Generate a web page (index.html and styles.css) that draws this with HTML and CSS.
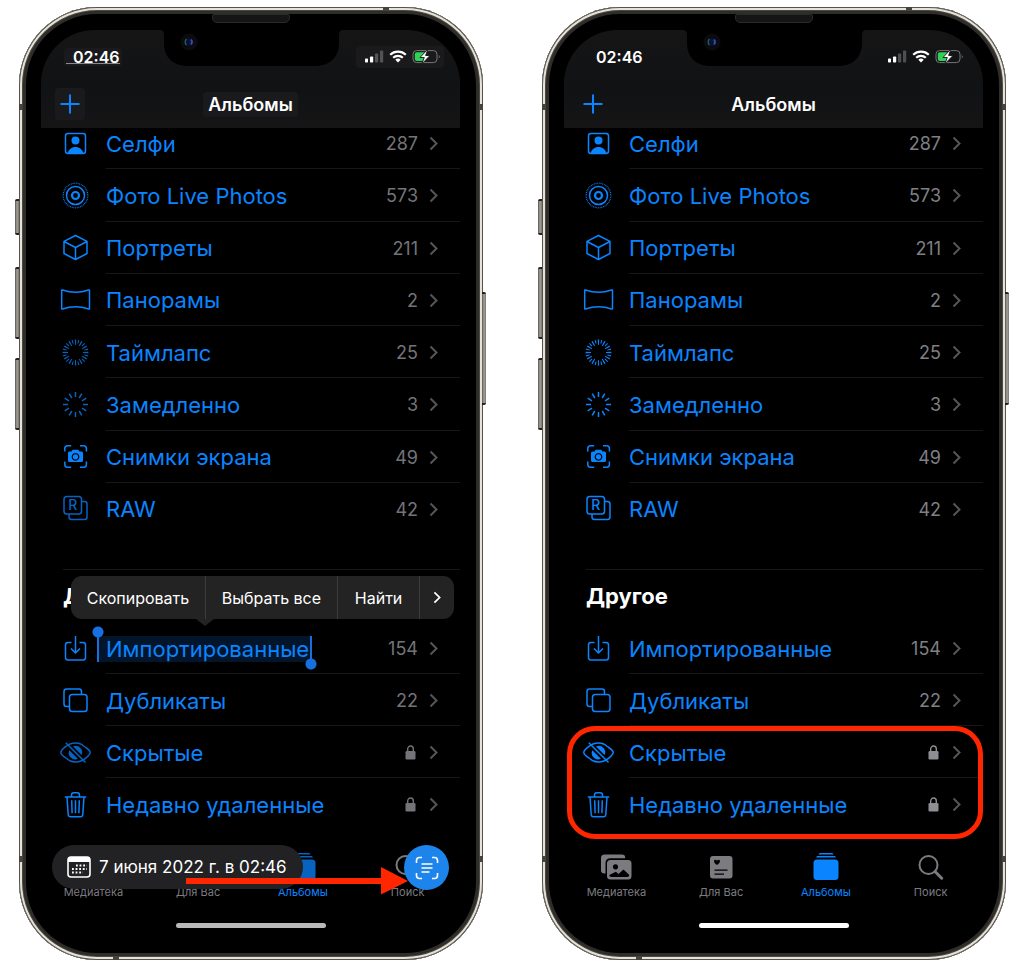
FILE: index.html
```html
<!DOCTYPE html>
<html lang="ru">

<head>
  <meta charset="UTF-8">
  <meta name="viewport" content="width=device-width, initial-scale=1.0">
  <title>Альбомы</title>
  <link rel="stylesheet" href="styles.css">
</head>

<body>
  <!-- icons -->
  <svg class="sprite" aria-hidden="true">
    <symbol id="i-selfie" viewBox="0 0 31 31">
      <rect x="5.5" y="5.5" width="20" height="20" rx="2.5" />
      <circle class="fill" cx="15.5" cy="12.5" r="4" />
      <path class="fill" d="M7.5 25.5c1-4 4-6.500 8-6.500s7 2.500 8 6.500z" />
    </symbol>
    <symbol id="i-live" viewBox="0 0 31 31">
      <circle cx="15.500" cy="15.500" r="3.500" stroke-width="2.200" />
      <circle cx="15.500" cy="15.500" r="9" />
      <circle cx="15.500" cy="15.500" r="12.300" stroke-width="1.200" pathLength="90" stroke-dasharray="1 1" />
    </symbol>
    <symbol id="i-cube" viewBox="0 0 31 31">
      <path d="M15.500 3.500 27 9.300V21.500L15.500 27.500 4 21.500V9.300zM4 9.500l11.500 6L27 9.500M15.500 15.500v12" />
    </symbol>
    <symbol id="i-pano" viewBox="0 0 31 31">
      <path d="M1.700 6.500q0-.8.8-.5c8.500 3 17.500 3 26 0q1-.3 1 .5v18q0 .8-1 .5c-8.500-3-17.500-3-26 0q-.8.3-.8-.5z" />
    </symbol>
    <symbol id="i-lapse" viewBox="0 0 31 31">
      <circle cx="15.500" cy="15.500" r="10.200" stroke-width="5.400" pathLength="120" stroke-dasharray="2.200 7.800" stroke-dashoffset="1.100" />
      <circle cx="15.500" cy="15.500" r="11" stroke-width="3.800" pathLength="120" stroke-dasharray="1.800 8.200" stroke-dashoffset="5.900" />
    </symbol>
    <symbol id="i-slomo" viewBox="0 0 31 31">
      <path d="M15.500 3v5M15.500 23v5M3 15.500h5M23 15.500h5M9.200 4.700l2.600 4.300M19.200 22l2.600 4.300M4.700 9.200l4.300 2.600M22 19.200l4.300 2.600M4.700 21.800 9 19.200M22 11.800l4.300-2.600M9.200 26.300l2.600-4.300M19.200 9l2.600-4.300" />
    </symbol>
    <symbol id="i-shot" viewBox="0 0 31 31">
      <path d="M4.800 10.500V7.500q0-2.800 2.800-2.800h3.600M20 4.700h3.600q2.800 0 2.800 2.800v3M26.400 20.500v3q0 2.800-2.800 2.800H20M11.200 26.300H7.600q-2.800 0-2.800-2.800v-3" />
      <path class="fill" fill-rule="evenodd" d="M8 12q0-1.500 1.500-1.500h2l1.200-1.700h5.600l1.200 1.700h2q1.500 0 1.500 1.500v7.500q0 1.500-1.500 1.500h-12Q8 21 8 19.500zM15.500 12a3.900 3.900 0 1 0 .01 0zM15.500 13.200a2.700 2.700 0 1 1-.01 0z" />
    </symbol>
    <symbol id="i-raw" viewBox="0 0 31 31">
      <rect x="4" y="3.500" width="17.500" height="17.500" rx="2.800" />
      <path d="M21.500 8.500h3q2.500 0 2.500 2.500v13q0 2.500-2.500 2.500h-13q-2.500 0-2.500-2.500v-3" />
      <text x="12.800" y="17.300">R</text>
    </symbol>
    <symbol id="i-import" viewBox="0 0 31 31">
      <path d="M11.500 9.500H8q-2.500 0-2.500 2.500v12.500Q5.500 27 8 27h15q2.500 0 2.500-2.500V12q0-2.500-2.500-2.500h-3.500M15.500 3v16.500M11 15.500l4.500 4.500 4.500-4.500" />
    </symbol>
    <symbol id="i-copies" viewBox="0 0 31 31">
      <rect x="9.500" y="9.500" width="17.500" height="17" rx="2.800" />
      <path d="M9.500 21.500h-3Q4 21.500 4 19V6.500Q4 4 6.500 4h12.500Q21.500 4 21.500 6.500v3" />
    </symbol>
    <symbol id="i-hidden" viewBox="0 0 31 31">
      <path d="M6 21C2.500 18.800.8 16.300.8 15.500c0-1.500 6-9.500 14.700-9.500 2 0 4 .4 5.700 1.200M25 10c3.500 2.200 5.200 4.700 5.200 5.500 0 1.500-6 9.500-14.700 9.500-2 0-4-.4-5.700-1.200" />
      <path d="M6 21 9.800 23.800M21.200 7.200 25 10M5.800 5.800 25.500 25.500" />
      <path class="fill" d="M13 9.500a6.500 6.500 0 0 1 8.600 8.600zM9.300 13.200a6.500 6.500 0 0 0 8.600 8.600z" />
    </symbol>
    <symbol id="i-trash" viewBox="0 0 31 31">
      <path d="M4.800 8h21.400M7 8l1.200 17.500q.2 2.300 2.300 2.300h10q2.100 0 2.300-2.300L24 8M11.500 8V6q0-2.300 2.300-2.300h3.400q2.300 0 2.300 2.300v2M11.700 11.300l.4 13M15.500 11.300v13M19.300 11.300l-.4 13" />
    </symbol>
    <symbol id="i-chevron" viewBox="0 0 9 15">
      <path d="M1.500 1.500 7.500 7.500 1.500 13.500" />
    </symbol>
    <symbol id="i-lock" viewBox="0 0 11 15">
      <rect x=".5" y="6" width="10" height="8.500" rx="1.300" fill="currentColor" />
      <path d="M2.700 6.500V4a2.800 3 0 0 1 5.600 0v2.500" fill="none" stroke="currentColor" stroke-width="1.400" />
    </symbol>
    <symbol id="i-status" viewBox="0 0 76 15">
      <g fill="#fff">
        <rect x="0" y="9.500" width="3" height="4" rx=".8" />
        <rect x="5" y="7.500" width="3.200" height="6" rx=".8" />
        <rect x="10" y="4.500" width="3.200" height="9" rx=".8" opacity=".25" />
        <rect x="15" y="1.500" width="3.200" height="12" rx=".8" opacity=".25" />
        <path d="M33 13.500l-2.700-2.700a3.900 3.900 0 0 1 5.400 0z" />
      </g>
      <g fill="none" stroke="#fff" stroke-width="2.200">
        <path d="M28.200 8.800a6.900 6.900 0 0 1 9.600 0M25.200 5.700a11.200 11.200 0 0 1 15.600 0" />
      </g>
      <rect x="48" y="1.600" width="24" height="12" rx="3.600" fill="none" stroke="#777" />
      <path d="M73.800 5.600q1.700 2 0 4z" fill="#777" />
      <rect x="49.800" y="3.300" width="11" height="8.600" rx="2" fill="#30d158" />
      <path d="M63 0l-8 8.500h4.300L56.800 15l8.200-8.500h-4.400z" fill="#fff" stroke="#161617" stroke-width=".9" />
    </symbol>
    <symbol id="t-library" viewBox="0 0 32 32">
      <path d="M1 5q0-3.500 3.500-3.500h17.500q3.200 0 3.200 3v.7H10.500Q5.500 5.200 5.500 10v10.500H4.500Q1 20.500 1 17z" />
      <path fill-rule="evenodd" d="M7 10.500Q7 7 10.500 7H28q3.500 0 3.500 3.500V23q0 3.500-3.500 3.500H10.500Q7 26.500 7 23zM9.300 22q0 2 2 2h16q2 0 2-2l-5.800-5.500-5 4.500-2.700-2.200zM15.500 11.300a2.600 2.600 0 1 0 .01 0z" />
    </symbol>
    <symbol id="t-foryou" viewBox="0 0 32 32">
      <path fill-rule="evenodd" d="M5 6q0-3 3-3h16.500q3 0 3 3v16.500q0 3-3 3H8q-3 0-3-3zM12 12c-4-2.600-3.300-5.300-1.700-5.300q1.100 0 1.700 1.100.6-1.100 1.700-1.100c1.600 0 2.300 2.700-1.700 5.300zM9.500 16.500v1.200h13v-1.200zM9.500 20.500v1.200h9.500v-1.200z" />
    </symbol>
    <symbol id="t-albums" viewBox="0 0 32 32">
      <path d="M9.500 0h13l1 1.500h-15zM7 3h18l1 1.600H6zM3.500 10q0-3.500 3.500-3.500h18q3.500 0 3.500 3.500v13.500q0 3.500-3.500 3.500H7q-3.500 0-3.500-3.500z" />
    </symbol>
    <symbol id="t-search" viewBox="0 0 32 32">
      <circle cx="13.500" cy="12" r="9" fill="none" stroke="currentColor" stroke-width="2" />
      <path d="M20 18.500l6.700 6.700" fill="none" stroke="currentColor" stroke-width="3" stroke-linecap="round" />
    </symbol>
    <symbol id="notch" viewBox="0 0 183 37">
      <path d="M0 0q4 0 4 5v8c0 14 9 23 24 23h127c15 0 24-9 24-23V5q0-5 4-5z" fill="#000" />
      <circle cx="29" cy="12" r="8.500" fill="#0b0b0f" />
      <circle cx="29" cy="12" r="4" fill="#0c1130" />
      <path d="M26.500 9a4 4 0 0 0 0 6" fill="none" stroke="#1d6a60" stroke-width="1.200" />
      <path d="M31 9.500a4 4 0 0 1 0 5" fill="none" stroke="#3949b8" stroke-width="1.800" />
    </symbol>
  </svg>

  <main class="phones">
    <section class="phone phone-select">
      <i class="key key-mute"></i><i class="key key-up"></i><i class="key key-down"></i><i class="key key-power"></i>
      <i class="band band-top"></i><i class="band band-left"></i><i class="band band-bottom"></i>
      <i class="speaker"></i>
      <header class="top">
        <svg class="notch"><use href="#notch" /></svg>
        <div class="status">
          <span class="time">02:46</span>
          <svg class="signals" role="img" aria-label="Сеть, Wi-Fi, батарея"><use href="#i-status" /></svg>
        </div>
        <div class="nav">
          <button class="add" type="button" aria-label="Добавить"><svg viewBox="0 0 20 20"><path d="M10 .5v19M.5 10h19" /></svg></button>
          <h1>Альбомы</h1>
        </div>
      </header>
      <ul class="albums types">
        <li><a href="#"><svg class="icon"><use href="#i-selfie" /></svg><span class="row"><span class="name">Селфи</span><span class="count">287</span><svg class="chevron"><use href="#i-chevron" /></svg></span></a></li>
        <li><a href="#"><svg class="icon"><use href="#i-live" /></svg><span class="row"><span class="name">Фото Live Photos</span><span class="count">573</span><svg class="chevron"><use href="#i-chevron" /></svg></span></a></li>
        <li><a href="#"><svg class="icon"><use href="#i-cube" /></svg><span class="row"><span class="name">Портреты</span><span class="count">211</span><svg class="chevron"><use href="#i-chevron" /></svg></span></a></li>
        <li><a href="#"><svg class="icon"><use href="#i-pano" /></svg><span class="row"><span class="name">Панорамы</span><span class="count">2</span><svg class="chevron"><use href="#i-chevron" /></svg></span></a></li>
        <li><a href="#"><svg class="icon dim"><use href="#i-lapse" /></svg><span class="row"><span class="name">Таймлапс</span><span class="count">25</span><svg class="chevron"><use href="#i-chevron" /></svg></span></a></li>
        <li><a href="#"><svg class="icon dim"><use href="#i-slomo" /></svg><span class="row"><span class="name">Замедленно</span><span class="count">3</span><svg class="chevron"><use href="#i-chevron" /></svg></span></a></li>
        <li><a href="#"><svg class="icon"><use href="#i-shot" /></svg><span class="row"><span class="name">Снимки экрана</span><span class="count">49</span><svg class="chevron"><use href="#i-chevron" /></svg></span></a></li>
        <li><a href="#"><svg class="icon dim"><use href="#i-raw" /></svg><span class="row"><span class="name">RAW</span><span class="count">42</span><svg class="chevron"><use href="#i-chevron" /></svg></span></a></li>
      </ul>
      <div class="other">
        <h2>Другое</h2>
        <ul class="albums">
          <li><a href="#"><svg class="icon"><use href="#i-import" /></svg><span class="row"><span class="name"><span class="selected">Импортированные</span></span><span class="count">154</span><svg class="chevron"><use href="#i-chevron" /></svg></span></a></li>
          <li><a href="#"><svg class="icon"><use href="#i-copies" /></svg><span class="row"><span class="name">Дубликаты</span><span class="count">22</span><svg class="chevron"><use href="#i-chevron" /></svg></span></a></li>
          <li><a href="#"><svg class="icon dim"><use href="#i-hidden" /></svg><span class="row"><span class="name">Скрытые</span><svg class="lock"><use href="#i-lock" /></svg><svg class="chevron"><use href="#i-chevron" /></svg></span></a></li>
          <li><a href="#"><svg class="icon"><use href="#i-trash" /></svg><span class="row"><span class="name">Недавно удаленные</span><svg class="lock"><use href="#i-lock" /></svg><svg class="chevron"><use href="#i-chevron" /></svg></span></a></li>
        </ul>
        <div class="menu">
          <button type="button">Скопировать</button>
          <button type="button">Выбрать все</button>
          <button type="button">Найти</button>
          <button type="button" aria-label="Ещё"><svg class="chevron"><use href="#i-chevron" /></svg></button>
        </div>
      </div>
      <footer class="bottom">
        <nav class="tabs">
          <a href="#"><svg><use href="#t-library" /></svg>Медиатека</a>
          <a href="#"><svg><use href="#t-foryou" /></svg>Для Вас</a>
          <a href="#" class="active"><svg><use href="#t-albums" /></svg>Альбомы</a>
          <a href="#"><svg><use href="#t-search" /></svg>Поиск</a>
        </nav>
        <div class="home"></div>
        <button class="date" type="button">
          <svg viewBox="0 0 24 22">
            <rect x="1" y="1" width="22" height="20" rx="3" fill="none" stroke="#fff" stroke-width="1.600" />
            <path d="M1 6V4q0-3 3-3h16q3 0 3 3v2z" fill="#fff" />
            <path d="M9 9.500h11M5 13h15M5 16.500h11" stroke="#fff" stroke-width="1.800" stroke-dasharray="1.800 1.800" />
          </svg>
          7 июня 2022 г. в 02:46
        </button>
        <button class="scan" type="button" aria-label="Распознать текст">
          <svg viewBox="0 0 24 24"><path d="M1.500 7V4.500q0-3 3-3H7M17 1.500h2.500q3 0 3 3V7M22.500 17v2.500q0 3-3 3H17M7 22.500H4.500q-3 0-3-3V17M6.500 8h11M6.500 12h11M6.500 16h8" /></svg>
        </button>
        <svg class="arrow" viewBox="0 0 222 28"><path d="M0 11h195V0l27 14-27 13.500V17H0z" /></svg>
      </footer>
    </section>

    <section class="phone">
      <i class="key key-mute"></i><i class="key key-up"></i><i class="key key-down"></i><i class="key key-power"></i>
      <i class="band band-top"></i><i class="band band-left"></i><i class="band band-bottom"></i>
      <i class="speaker"></i>
      <header class="top">
        <svg class="notch"><use href="#notch" /></svg>
        <div class="status">
          <span class="time">02:46</span>
          <svg class="signals" role="img" aria-label="Сеть, Wi-Fi, батарея"><use href="#i-status" /></svg>
        </div>
        <div class="nav">
          <button class="add" type="button" aria-label="Добавить"><svg viewBox="0 0 20 20"><path d="M10 .5v19M.5 10h19" /></svg></button>
          <h1>Альбомы</h1>
        </div>
      </header>
      <ul class="albums types">
        <li><a href="#"><svg class="icon"><use href="#i-selfie" /></svg><span class="row"><span class="name">Селфи</span><span class="count">287</span><svg class="chevron"><use href="#i-chevron" /></svg></span></a></li>
        <li><a href="#"><svg class="icon"><use href="#i-live" /></svg><span class="row"><span class="name">Фото Live Photos</span><span class="count">573</span><svg class="chevron"><use href="#i-chevron" /></svg></span></a></li>
        <li><a href="#"><svg class="icon"><use href="#i-cube" /></svg><span class="row"><span class="name">Портреты</span><span class="count">211</span><svg class="chevron"><use href="#i-chevron" /></svg></span></a></li>
        <li><a href="#"><svg class="icon"><use href="#i-pano" /></svg><span class="row"><span class="name">Панорамы</span><span class="count">2</span><svg class="chevron"><use href="#i-chevron" /></svg></span></a></li>
        <li><a href="#"><svg class="icon"><use href="#i-lapse" /></svg><span class="row"><span class="name">Таймлапс</span><span class="count">25</span><svg class="chevron"><use href="#i-chevron" /></svg></span></a></li>
        <li><a href="#"><svg class="icon"><use href="#i-slomo" /></svg><span class="row"><span class="name">Замедленно</span><span class="count">3</span><svg class="chevron"><use href="#i-chevron" /></svg></span></a></li>
        <li><a href="#"><svg class="icon"><use href="#i-shot" /></svg><span class="row"><span class="name">Снимки экрана</span><span class="count">49</span><svg class="chevron"><use href="#i-chevron" /></svg></span></a></li>
        <li><a href="#"><svg class="icon"><use href="#i-raw" /></svg><span class="row"><span class="name">RAW</span><span class="count">42</span><svg class="chevron"><use href="#i-chevron" /></svg></span></a></li>
      </ul>
      <div class="other">
        <h2>Другое</h2>
        <ul class="albums">
          <li><a href="#"><svg class="icon"><use href="#i-import" /></svg><span class="row"><span class="name">Импортированные</span><span class="count">154</span><svg class="chevron"><use href="#i-chevron" /></svg></span></a></li>
          <li><a href="#"><svg class="icon"><use href="#i-copies" /></svg><span class="row"><span class="name">Дубликаты</span><span class="count">22</span><svg class="chevron"><use href="#i-chevron" /></svg></span></a></li>
          <li><a href="#"><svg class="icon"><use href="#i-hidden" /></svg><span class="row"><span class="name">Скрытые</span><svg class="lock"><use href="#i-lock" /></svg><svg class="chevron"><use href="#i-chevron" /></svg></span></a></li>
          <li><a href="#"><svg class="icon"><use href="#i-trash" /></svg><span class="row"><span class="name">Недавно удаленные</span><svg class="lock"><use href="#i-lock" /></svg><svg class="chevron"><use href="#i-chevron" /></svg></span></a></li>
        </ul>
        <div class="frame"></div>
      </div>
      <footer class="bottom">
        <nav class="tabs">
          <a href="#"><svg><use href="#t-library" /></svg>Медиатека</a>
          <a href="#"><svg><use href="#t-foryou" /></svg>Для Вас</a>
          <a href="#" class="active"><svg><use href="#t-albums" /></svg>Альбомы</a>
          <a href="#"><svg><use href="#t-search" /></svg>Поиск</a>
        </nav>
        <div class="home"></div>
      </footer>
    </section>
  </main>
</body>

</html>
```
FILE: styles.css
```css
* {
  box-sizing: border-box;
}

body {
  margin: 0;
  background: #fff;
  color: #fff;
  font-family: Inter, "Liberation Sans", sans-serif;
}

h1,
h2,
ul {
  margin: 0;
  padding: 0;
}

a {
  color: inherit;
  text-decoration: none;
}

button {
  border: 0;
  padding: 0;
  background: none;
  color: inherit;
  font: inherit;
}

svg {
  display: block;
  flex-shrink: 0;
}

.sprite {
  display: none;
}

.phones {
  display: flex;
  gap: 59px;
  padding: 7px 18px 7px 19px;
}

/* phone body */
.phone {
  position: relative;
  flex: 1;
  padding: 23px 23px 0 22px;
  border-radius: 78px;
  background: #000;
  box-shadow: inset 0 0 0 1px #55534e, inset 0 0 0 3px #e6e2d8, inset 0 0 0 4px #4a4842, inset 0 0 0 7px #2e2d29;
}

.key {
  position: absolute;
  left: -4px;
  width: 4px;
  border: solid #22211f;
  border-width: 2px 0;
  border-radius: 2px 0 0 2px;
  background: linear-gradient(90deg, #55534e, #a5a29a, #77746d);
}

.key-mute {
  top: 192px;
  height: 36px;
}

.key-up {
  top: 260px;
  height: 72px;
}

.key-down {
  top: 351px;
  height: 72px;
}

.key-power {
  top: 285px;
  left: auto;
  right: -3px;
  height: 113px;
  border-radius: 0 2px 2px 0;
}

.band::before,
.band::after {
  content: "";
  position: absolute;
  background: #45433e;
}

.band-left::before,
.band-left::after {
  top: 97px;
  width: 4px;
  height: 6px;
}

.band-left::before,
.band-bottom::before {
  left: 0;
}

.band-left::after,
.band-bottom::after {
  right: 0;
}

.band-bottom::before,
.band-bottom::after {
  bottom: 98px;
  width: 4px;
  height: 6px;
}

.band-top::before,
.band-top::after {
  width: 6px;
  height: 4px;
}

.band-top::before {
  top: 0;
  right: 94px;
}

.band-top::after {
  bottom: 0;
  left: 94px;
}

.speaker {
  position: absolute;
  top: 7px;
  left: calc(50% - 39px);
  width: 78px;
  height: 9px;
  border: 1px solid #2a2a2a;
  border-radius: 2px 2px 5px 5px;
  background: #151515;
}

/* header */
.top {
  position: relative;
  z-index: 1;
  padding-top: 16px;
  height: 98px;
  border-radius: 54px 54px 0 0;
  background: linear-gradient(#151516, #111214 60%, #151516);
}

.notch {
  position: absolute;
  top: 0;
  left: calc(50% - 91px);
  width: 183px;
  height: 37px;
}

.status,
.nav {
  display: flex;
  align-items: center;
}

.status {
  justify-content: space-between;
  height: 22px;
  padding: 0 16px 0 23px;
}

.time {
  padding: 0 2px 0 9px;
  border-radius: 3px;
  font-size: 16px;
  line-height: 18px;
  font-weight: 600;
}

.signals {
  width: 88px;
  height: 22px;
  padding: 3px 3px 4px 9px;
  border-radius: 4px;
}

.nav {
  position: relative;
  justify-content: center;
  height: 32px;
  margin-top: 20px;
}

.add {
  position: absolute;
  left: 14px;
  width: 30px;
  height: 32px;
  padding: 0 5px;
  border-radius: 4px;
}

.add svg {
  width: 20px;
  height: 20px;
  stroke: #0a84ff;
  stroke-width: 2;
}

h1 {
  padding: 1px 5px 0;
  border-radius: 4px;
  font-size: 18px;
  line-height: 24px;
  font-weight: 600;
}

/* album lists */
.albums {
  display: grid;
  grid-auto-rows: 52px;
  list-style: none;
}

.types {
  height: 418px;
  margin-top: -11px;
  grid-auto-rows: 1fr;
}

.albums a {
  display: flex;
  align-items: center;
  gap: 15px;
  height: 100%;
  padding-left: 19px;
}

.row {
  display: flex;
  flex: 1;
  align-items: center;
  height: 100%;
  padding: 2px 22px 0 0;
  border-bottom: 1px solid #171719;
}

li:last-child .row {
  border-color: transparent;
}

.name {
  flex: 1;
  color: #0a84ff;
  font-size: 22px;
  line-height: 26px;
  white-space: nowrap;
}

.count {
  margin-right: 11px;
  color: #7f7f84;
  font-size: 18px;
}

.icon {
  width: 31px;
  height: 31px;
  color: #0a84ff;
  fill: none;
  stroke: currentColor;
  stroke-width: 1.5;
  stroke-linejoin: round;
}

.icon.dim {
  opacity: .75;
}

.fill {
  fill: #0a84ff;
  stroke: none;
}

symbol text {
  fill: #0a84ff;
  stroke: none;
  font-size: 14px;
  font-weight: 500;
  text-anchor: middle;
}

.chevron {
  width: 9px;
  height: 15px;
  fill: none;
  stroke: #55555a;
  stroke-width: 2;
}

.lock {
  width: 11px;
  height: 15px;
  margin-right: 13px;
  color: #8e8e93;
}

.other {
  position: relative;
  margin-top: 34px;
}

h2 {
  margin-left: 22px;
  border-top: 1px solid #171719;
  font-size: 22px;
  line-height: 52px;
  font-weight: 700;
}

.frame {
  position: absolute;
  top: 157px;
  left: 3px;
  right: 0;
  height: 113px;
  border: 5px solid #ff2600;
  border-radius: 28px;
}

/* tab bar */
.bottom {
  position: relative;
  padding: 23px 0 32px;
}

.tabs {
  display: flex;
}

.tabs a {
  display: flex;
  flex: 1;
  flex-direction: column;
  align-items: center;
  color: #7c7c80;
  font-size: 11px;
  line-height: 14px;
}

.tabs svg {
  width: 32px;
  height: 32px;
  fill: currentColor;
}

.tabs .active {
  color: #0a84ff;
}

.home {
  width: 150px;
  height: 5px;
  margin: 24px auto 0;
  border-radius: 3px;
  background: #fff;
}

/* text selection on the first phone */
.phone-select .time,
.phone-select .signals,
.phone-select .add,
.phone-select h1 {
  background-color: #1a1a1c;
}

.phone-select .time {
  background-image: linear-gradient(#8a8a8c, #8a8a8c);
  background-position: 2px 15px;
  background-size: 54px 1px;
  background-repeat: no-repeat;
}

.phone-select .count,
.phone-select .lock {
  color: #747478;
}

.phone-select .home {
  background: #b9b9b9;
}

.phone-select .active svg {
  opacity: .75;
}

.selected {
  position: relative;
  display: inline-block;
  margin-left: -8px;
  padding: 0 2px 0 8px;
  background: #03152a;
}

.selected::before,
.selected::after {
  content: "";
  position: absolute;
  width: 12px;
  background:
    radial-gradient(circle at 6px 6px, #176fe0 5px, transparent 6px),
    linear-gradient(#176fe0, #176fe0) 5px 6px / 2px 100% no-repeat;
}

.selected::before {
  left: -6px;
  bottom: 0;
  height: 36px;
}

.selected::after {
  top: 0;
  right: -6px;
  height: 34px;
  rotate: 180deg;
}

.menu {
  position: absolute;
  top: 7px;
  left: 30px;
  right: 6px;
  display: flex;
  height: 43px;
  border-radius: 11px;
  background: #232323;
  font-size: 16px;
}

.menu::after {
  content: "";
  position: absolute;
  top: 43px;
  left: 125px;
  border: solid transparent;
  border-width: 7px 9px 0;
  border-top-color: #232323;
}

.menu button {
  flex: 132 0 0;
  border-left: 1px solid #3c3c3c;
}

.menu button:first-child {
  flex-grow: 135;
  border: 0;
}

.menu button:nth-child(3) {
  flex-grow: 82;
}

.menu button:last-child {
  flex-grow: 34;
}

.menu .chevron {
  width: 8px;
  height: 13px;
  margin: 0 auto;
  stroke: #fff;
}

.date {
  position: absolute;
  top: 15px;
  left: 11px;
  display: flex;
  align-items: center;
  gap: 8px;
  height: 44px;
  padding: 0 16px 0 15px;
  border-radius: 22px;
  background: #222224;
  font-size: 17px;
}

.date svg {
  width: 24px;
  height: 22px;
}

.scan {
  position: absolute;
  top: 15px;
  right: 11px;
  width: 45px;
  height: 45px;
  border-radius: 50%;
  background: #1d84ec;
}

.scan svg {
  width: 24px;
  height: 24px;
  margin: 0 auto;
  fill: none;
  stroke: #fff;
  stroke-width: 1.6;
}

.arrow {
  position: absolute;
  top: 37px;
  right: 52px;
  width: 222px;
  height: 28px;
  fill: #ff2600;
}
```
